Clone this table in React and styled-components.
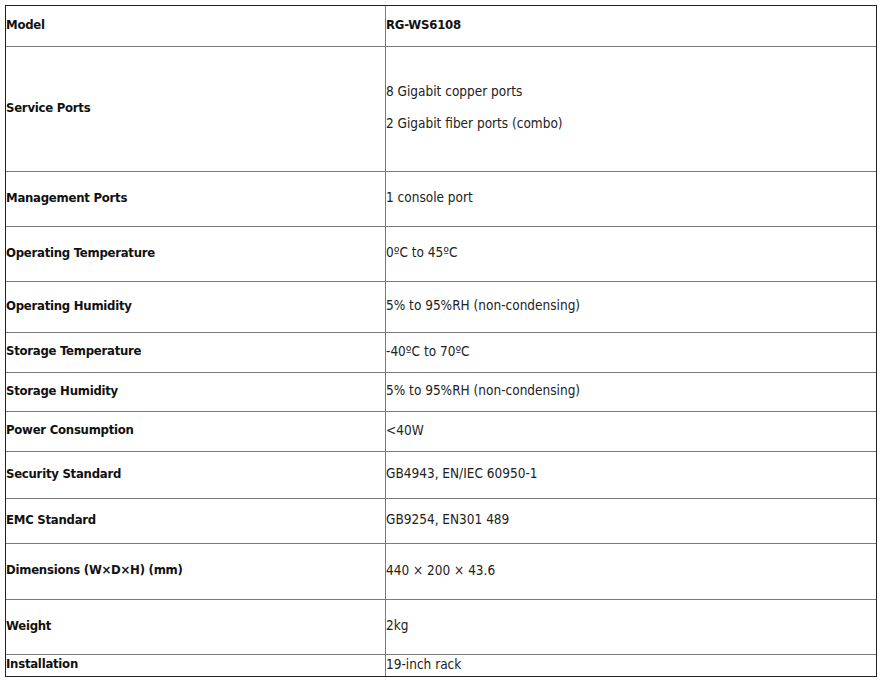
import React from "react"
import styled, { createGlobalStyle } from "styled-components"

const GlobalStyle = createGlobalStyle`
  html, body {
    margin: 0;
    background: #fff;
  }
  body {
    font-family: "DejaVu Sans Condensed", "Liberation Sans", sans-serif;
  }
`

const Page = styled.div`
  padding: 5px 0 0 5px;
`

const SpecTable = styled.table`
  width: 872px;
  border: 1px solid #222;
  border-spacing: 0;
  font-size: 13.5px;
  color: #222;
`

const Cell = styled.td`
  height: ${props => props.h}px;
  padding: 0 0 4px 0;
  vertical-align: middle;
  border-bottom: ${props => (props.last ? "none" : "1px solid #7a7a7a")};
  box-sizing: border-box;
`

const Label = styled(Cell)`
  width: 380px;
  border-right: 1px solid #7a7a7a;
  font-size: 13px;
  font-weight: bold;
  letter-spacing: -0.25px;
  color: #111;
`

const Value = styled(Cell)``

const Strong = styled.b`
  font-size: 13px;
  letter-spacing: -0.2px;
  color: #111;
`

const Line = styled.p`
  margin: 0;
  & + & {
    margin-top: 16px;
  }
`

const specs = [
  ["Model", [<Strong key="m">RG-WS6108</Strong>], 41],
  ["Service Ports", ["8 Gigabit copper ports", "2 Gigabit fiber ports (combo)"], 125],
  ["Management Ports", ["1 console port"], 55],
  ["Operating Temperature", ["0ºC to 45ºC"], 55],
  ["Operating Humidity", ["5% to 95%RH (non-condensing)"], 51],
  ["Storage Temperature", ["-40ºC to 70ºC"], 40],
  ["Storage Humidity", ["5% to 95%RH (non-condensing)"], 39],
  ["Power Consumption", ["<40W"], 40],
  ["Security Standard", ["GB4943, EN/IEC 60950-1"], 47],
  ["EMC Standard", ["GB9254, EN301 489"], 45],
  ["Dimensions (W×D×H) (mm)", ["440 × 200 × 43.6"], 56],
  ["Weight", ["2kg"], 55],
  ["Installation", ["19-inch rack"], 21],
]

const App = () => {
  return (
    <Page>
      <GlobalStyle />
      <SpecTable>
        <tbody>
          {specs.map(([name, lines, h], i) => {
            const last = i === specs.length - 1
            return (
              <tr key={name}>
                <Label h={h} last={last}>{name}</Label>
                <Value h={h} last={last}>
                  {lines.map((l, j) => (
                    <Line key={j}>{l}</Line>
                  ))}
                </Value>
              </tr>
            )
          })}
        </tbody>
      </SpecTable>
    </Page>
  )
}

export default App
